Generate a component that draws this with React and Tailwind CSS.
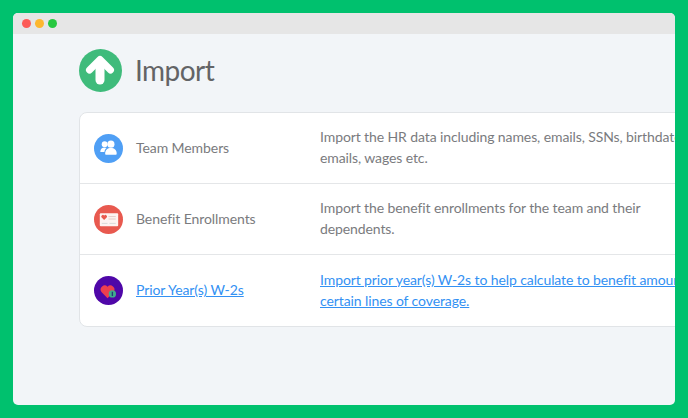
function Row({ icon, title, desc, link, last }) {
  const tc = link ? "text-[#3391f3] underline" : "text-[#7a7b7e]";
  return (
    <div className={`flex items-center h-[71px] ${last ? "" : "border-b border-[#e4e6e8]"}`}>
      <div className="w-[56px] pl-[14px] shrink-0">{icon}</div>
      <div className={`w-[184px] shrink-0 pb-[2px] text-[14px] tracking-[-0.08px] ${tc}`}>{title}</div>
      <div className={`w-[420px] shrink-0 pb-[2px] whitespace-nowrap text-[14px] tracking-[-0.1px] leading-[21px] ${tc}`}>{desc}</div>
    </div>
  );
}
const Team = (
  <svg width="29" height="29" viewBox="0 0 30 30" className="block">
    <circle cx="15" cy="15" r="15" fill="#4f9ff5" />
    <circle cx="11" cy="10.500" r="3" fill="#fff" />
    <path d="M6.500 18.500c0-3 2-4.500 4.500-4.500 1 0 1.600.2 2 .5-1.300 1-2 2.300-2.200 4z" fill="#fff" />
    <circle cx="17.500" cy="10.500" r="3.700" fill="#fff" />
    <path d="M11.500 20.500c0-4 2.500-6 6-6s6 2 6 6c0 .5-.5 1-1 1h-10c-.5 0-1-.5-1-1z" fill="#fff" />
  </svg>
);
const Benefit = (
  <svg width="29" height="29" viewBox="0 0 30 30" className="block">
    <circle cx="15" cy="15" r="15" fill="#e8594f" />
    <rect x="6" y="8.500" width="19" height="13.500" rx="1" fill="#fdf3f1" />
    <path d="M10.500 15.500l-2.800-2.800a1.600 1.600 0 0 1 2.800-1.600 1.600 1.600 0 0 1 2.800 1.600z" fill="#e8594f" />
    <rect x="15" y="11.500" width="7.500" height="1" fill="#e4c9c6" />
    <rect x="15" y="14" width="7.500" height="1" fill="#e4c9c6" />
    <rect x="8" y="18.500" width="6" height="1" fill="#d9d9d9" />
    <rect x="16" y="18.500" width="6.500" height="1" fill="#d9d9d9" />
  </svg>
);
const W2 = (
  <svg width="29" height="29" viewBox="0 0 30 30" className="block">
    <circle cx="15" cy="15" r="15" fill="#4f07a8" />
    <path d="M14 23l-6.300-6.500a4.200 4.200 0 0 1 6.300-5.500 4.200 4.200 0 0 1 6.300 5.500z" fill="#ee3f4f" />
    <circle cx="19" cy="18.500" r="3.800" fill="#3fae8c" />
    <rect x="18.300" y="16.300" width="1.400" height="4.400" fill="#243a7a" />
  </svg>
);
export default function App() {
  return (
    <div className="w-[688px] h-[418px] bg-[#00c16e] p-[13px]" style={{ fontFamily: 'Lato, "Noto Sans", sans-serif' }}>
      <div className="w-[662px] h-[392px] bg-[#f2f5f8] rounded-[5px] overflow-hidden">
        <div className="h-[21px] bg-[#e6e6e6] flex items-center gap-[4px] pl-[9px]">
          <span className="w-[9px] h-[9px] rounded-full bg-[#fc5b57]" />
          <span className="w-[9px] h-[9px] rounded-full bg-[#fdb72e]" />
          <span className="w-[9px] h-[9px] rounded-full bg-[#27c840]" />
        </div>
        <div className="pl-[66px] pt-[15px]">
          <div className="flex items-center gap-[13px] h-[42px]">
            <svg width="43" height="43" viewBox="0 0 43 43" className="block shrink-0">
              <circle cx="21.500" cy="21.500" r="21.500" fill="#3fbb7b" />
              <path d="M10.500 21L21 10.500 31.500 21" fill="none" stroke="#fff" strokeWidth="7" strokeLinecap="round" strokeLinejoin="round" />
              <path d="M21 14V31" fill="none" stroke="#fff" strokeWidth="9" strokeLinecap="round" />
            </svg>
            <div className="text-[28px] tracking-[-0.55px] text-[#636466] leading-none">Import</div>
          </div>
          <div className="mt-[21px] w-[700px] bg-white border border-[#e1e4e7] rounded-[8px]">
            <Row icon={Team} title="Team Members" desc={<>Import the HR data including names, emails, SSNs, birthdates, work<br />emails, wages etc.</>} />
            <Row icon={Benefit} title="Benefit Enrollments" desc={<>Import the benefit enrollments for the team and their<br />dependents.</>} />
            <Row icon={W2} title="Prior Year(s) W-2s" link last desc={<>Import prior year(s) W-2s to help calculate to benefit amounts for<br />certain lines of coverage.</>} />
          </div>
        </div>
      </div>
    </div>
  );
}
